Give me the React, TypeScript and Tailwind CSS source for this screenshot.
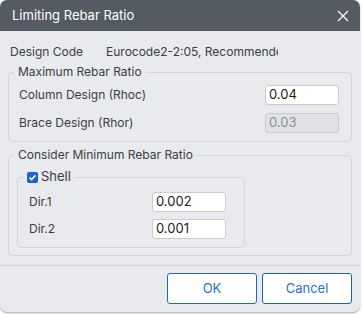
import type { ReactElement } from "react";

const font = { fontFamily: "Inter, 'Noto Sans', sans-serif" };

function Field({ value, disabled }: { value: string; disabled?: boolean }): ReactElement {
  return (
    <div
      className={
        "flex h-[20px] w-[74px] items-center rounded-[3px] border px-[3px] text-[13px] " +
        (disabled
          ? "border-[#c9cbd0] bg-[#e1e2e6] text-[#8b8e94]"
          : "border-[#c9cbd0] bg-white text-[#1b1b1b]")
      }
    >
      {value}
    </div>
  );
}

export default function App(): ReactElement {
  return (
    <div className="h-[314px] w-[362px] bg-white" style={font}>
      <div className="flex h-[312px] w-[360px] flex-col overflow-hidden rounded-[7px] bg-[#e9eaee] text-[12px] text-[#3a3d42] shadow-[0_1px_2px_rgba(0,0,0,0.35)]">
        {/* title bar */}
        <div className="flex h-[31px] shrink-0 items-center justify-between bg-[#555b63] pl-[12px] pr-[11px] text-[13px] text-white">
          <span>Limiting Rebar Ratio</span>
          <svg width="12" height="12" viewBox="0 0 12 12" stroke="white" strokeWidth="1.3">
            <path d="M1 1 L11 11 M11 1 L1 11" />
          </svg>
        </div>

        <div className="mt-[13px] flex h-[16px] items-center pl-[10px]">
          <span className="w-[96px]">Design Code</span>
          <span className="w-[172px] overflow-hidden whitespace-nowrap">Eurocode2-2:05, Recommended</span>
        </div>

        {/* maximum rebar ratio */}
        <fieldset className="mx-[8px] mt-[4px] rounded-[4px] border border-[#d3d5da]">
          <legend className="ml-[5px] h-[16px] px-[4px] leading-[16px]">Maximum Rebar Ratio</legend>
          <div className="flex flex-col gap-[8px] pb-[8px] pl-[10px] pr-[12px] pt-[5px]">
            <div className="flex items-center justify-between">
              <span>Column Design (Rhoc)</span>
              <Field value="0.04" />
            </div>
            <div className="flex items-center justify-between">
              <span>Brace Design (Rhor)</span>
              <Field value="0.03" disabled />
            </div>
          </div>
        </fieldset>

        {/* minimum rebar ratio */}
        <fieldset className="mx-[8px] mt-[5px] rounded-[4px] border border-[#d3d5da]">
          <legend className="ml-[5px] h-[16px] px-[4px] leading-[16px]">Consider Minimum Rebar Ratio</legend>
          <div className="pb-[7px] pl-[8px] pt-[6px]">
            <fieldset className="w-[228px] rounded-[4px] border border-[#d3d5da]">
              <legend className="ml-[6px] flex h-[16px] items-center gap-[3px] px-[3px] text-[13px]">
                <span className="flex h-[11px] w-[11px] items-center justify-center rounded-[2px] bg-[#1c63d5]">
                  <svg width="9" height="9" viewBox="0 0 9 9" fill="none" stroke="white" strokeWidth="1.6">
                    <path d="M1.5 4.6 L3.6 6.6 L7.5 2.4" />
                  </svg>
                </span>
                <span>Shell</span>
              </legend>
              <div className="flex flex-col gap-[7px] pb-[8px] pl-[11px] pr-[18px] pt-[7px]">
                <div className="flex items-center justify-between">
                  <span>Dir.1</span>
                  <Field value="0.002" />
                </div>
                <div className="flex items-center justify-between">
                  <span>Dir.2</span>
                  <Field value="0.001" />
                </div>
              </div>
            </fieldset>
          </div>
        </fieldset>

        <div className="mt-[9px] border-t border-[#cfd1d6]" />

        <div className="flex justify-end gap-[5px] pr-[8px] pt-[7px]">
          <button className="h-[31px] w-[90px] rounded-[3px] border border-[#2466c8] bg-white text-[13px] text-[#2a6fd6]">
            OK
          </button>
          <button className="h-[31px] w-[90px] rounded-[3px] border border-[#1f5cb8] bg-white text-[13px] text-[#2a6fd6]">
            Cancel
          </button>
        </div>
      </div>
    </div>
  );
}
